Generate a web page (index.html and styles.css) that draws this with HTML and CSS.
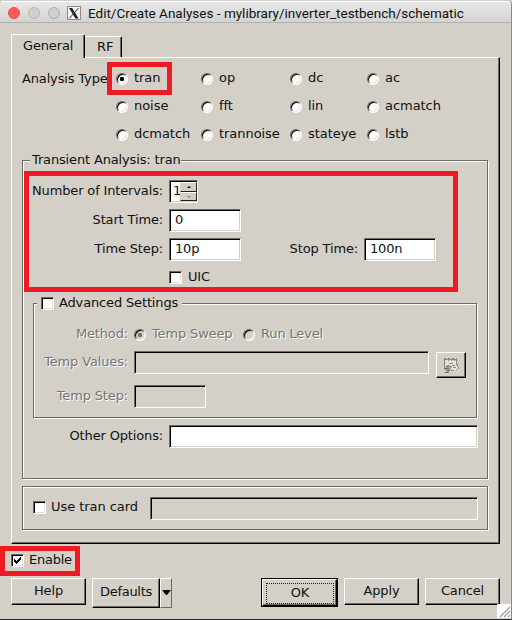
FILE: index.html
```html
<!DOCTYPE html>
<html lang="en">
<head>
<meta charset="utf-8">
<title>Edit/Create Analyses</title>
<link rel="stylesheet" href="styles.css">
</head>
<body>
<div class="window">
  <header class="titlebar">
    <i class="light close"></i><i class="light min"></i><i class="light max"></i>
    <svg class="xlogo" width="14" height="14" viewBox="0 0 14 14"><rect x=".5" y=".5" width="13" height="13" fill="#f4f4f4" stroke="#8b8b8b"/><path d="M2 2h3.2l6.4 10.500H8.400z" fill="#222"/><path d="M11.500 2L2.200 12.500" stroke="#333" stroke-width="1"/></svg>
    <span class="title">Edit/Create Analyses - mylibrary/inverter_testbench/schematic</span>
  </header>
  <nav class="tabs"><div class="tab active">General</div><div class="tab">RF</div></nav>
  <main class="panel">
    <section class="types">
      <span class="types-label">Analysis Type:</span>
      <div class="types-grid">
        <label><i class="radio on"></i>tran</label><label><i class="radio"></i>op</label><label><i class="radio"></i>dc</label><label><i class="radio"></i>ac</label>
        <label><i class="radio"></i>noise</label><label><i class="radio"></i>fft</label><label><i class="radio"></i>lin</label><label><i class="radio"></i>acmatch</label>
        <label><i class="radio"></i>dcmatch</label><label><i class="radio"></i>trannoise</label><label><i class="radio"></i>stateye</label><label><i class="radio"></i>lstb</label>
      </div>
    </section>
    <section class="group transient">
      <div class="legend">Transient Analysis: tran</div>
      <div class="row intervals"><span class="lab">Number of Intervals:</span>
        <div class="field spin"><span>1</span><div class="steps"><i class="step up"></i><i class="step down"></i></div></div></div>
      <div class="row"><span class="lab">Start Time:</span><div class="field short">0</div></div>
      <div class="row"><span class="lab">Time Step:</span><div class="field short">10p</div><span class="lab stop">Stop Time:</span><div class="field short">100n</div></div>
      <div class="row uic"><i class="check"></i><span>UIC</span></div>
      <section class="group advanced">
        <div class="legend"><i class="check"></i><span>Advanced Settings</span></div>
        <div class="arow method"><span class="alab">Method:</span><i class="radio on"></i><span class="sweep">Temp Sweep</span><i class="radio"></i><span class="level">Run Level</span></div>
        <div class="arow values"><span class="alab">Temp Values:</span><div class="field off long"></div>
          <div class="btn edit"><svg width="17" height="17" viewBox="0 0 17 17" shape-rendering="crispEdges"><path d="M1 2h12l2 8-3 3H5l-4-3z" fill="#e5e2db"/><path d="M1 1h2v1h2V1h2v1h2V1h2v1h2V1h1v3h-1V3h-1v1h-1V3H9v1H8V3H6v1H5V3H2v7H1z" fill="#86847f"/><path d="M13 4h1v3h1v3h1v2h-2v1h-3v1H8v-1h5v-1h2v-2h-1V8h-1zM6 6h4v1H6zM9 8h3v1H9zM10 10h3v1h-3z" fill="#8a8882"/><path d="M1 10h3V8h3v1h2v2H8v2H6v2H4v1H1v-1h2v-2H1z" fill="#aaa7a0"/><path d="M3 9h3v1H3zM7 9h1v1H7zM1 11h5v1H1zM4 13h3v1H4zM2 15h4v1H2z" fill="#6e6c68"/></svg></div></div>
        <div class="arow tstep"><span class="alab">Temp Step:</span><div class="field off short"></div></div>
      </section>
      <div class="row other"><span class="lab">Other Options:</span><div class="field wide"></div></div>
    </section>
    <section class="group card"><i class="check"></i><span class="card-label">Use tran card</span><div class="field off card-field"></div></section>
  </main>
  <div class="enable"><i class="check"><svg width="9" height="9" viewBox="0 0 9 9" shape-rendering="crispEdges"><path d="M1 3h1v1h1v1h1V4h1V3h1V2h1V1h1v3H7v1H6v1H5v1H4v1H3V7H2V6H1z"/></svg></i><span>Enable</span></div>
  <footer class="buttons">
    <div class="btn">Help</div>
    <div class="split"><div class="btn defaults">Defaults</div><div class="drop"><i></i></div></div>
    <div class="default-ring"><div class="btn ok"><span>OK</span></div></div>
    <div class="btn">Apply</div>
    <div class="btn">Cancel</div>
  </footer>
  <svg class="grip" width="15" height="15" viewBox="0 0 15 15"><path d="M0 0h15v14H0z" fill="#fff"/><path d="M3 13L13 3M7 13l6-6M11 13l2-2" stroke="#999" stroke-width="1.200"/></svg>
  <div class="mark mark-tran"></div><div class="mark mark-params"></div><div class="mark mark-enable"></div>
</div>
</body>
</html>
```
FILE: styles.css
```css
* { box-sizing: border-box; }
body { margin: 0; background: #d4d0c8; }
.window { position: relative; width: 512px; height: 620px; background: #d4d0c8; border-right: 1px solid #8b8986; border-bottom: 1px solid #2b2a29; border-radius: 5px 5px 0 0; font: 13px/16px "DejaVu Sans", sans-serif; letter-spacing: -.15px; color: #111; overflow: hidden; white-space: nowrap; }
.titlebar { display: flex; align-items: center; height: 23px; padding: 2px 0 0 8px; background: linear-gradient(#fff 0 1px, #e8e8e8 1px, #d3d3d3); border-top: 1px solid #d0d0d0; border-bottom: 1px solid #b1b1b3; }
.light { width: 12px; height: 12px; border-radius: 50%; margin-right: 8px; border: 1px solid #c3b3a1; background: #d2d0ce; }
.light.close { background: #fc5b57; border-color: #e2504c; }
.light.max { border-color: #9db59f; margin-right: 7px; }
.xlogo { margin-right: 7px; }
.title { font: 13.5px/18px Roboto, sans-serif; letter-spacing: 0; color: #111; }

.tabs { display: flex; align-items: flex-end; height: 34px; padding-left: 11px; }
.tab { height: 21px; width: 37px; padding: 2px 0 0 12px; border-top: 1px solid #fff; border-right: 1px solid #000; box-shadow: inset -1px 0 #6b6963; border-radius: 0 2px 0 0; }
.tab.active { position: relative; height: 24px; width: 74px; margin-bottom: -1px; padding: 3px 0 0 11px; border-left: 1px solid #fff; border-radius: 2px 2px 0 0; background: #d4d0c8; }
.panel { width: 489px; height: 487px; margin-left: 11px; border: 1px solid; border-color: #fff #000 #000 #fff; box-shadow: inset -1px -1px #6b6963; padding-left: 10px; }

.types { display: flex; height: 102px; padding-top: 6px; }
.types-label { width: 94px; padding-top: 7px; }
.types-grid { display: grid; grid-template-columns: 85px 89px 77px 90px; grid-template-rows: repeat(3, 28px); }
.types-grid label { display: flex; align-items: center; letter-spacing: -.05px; }
.radio { flex: none; width: 12px; height: 12px; border-radius: 50%; background: #fff; border: 1px solid; border-color: #6b6963 #fff #fff #6b6963; box-shadow: inset 1px 1px #000, inset -1px -1px #e8e5df; margin: 2px 6px 0 0; display: flex; align-items: center; justify-content: center; }
.radio.on::before { content: ""; width: 4px; height: 4px; border-radius: 1px; background: #000; }

.group { border: 1px solid #6b6963; box-shadow: 1px 1px #fff, inset 1px 1px #fff; }
.transient { width: 466px; height: 319px; }
.legend { width: 151px; height: 16px; margin: -9px 0 0 7px; padding-left: 2px; background: #d4d0c8; }
.row { display: flex; align-items: center; height: 23px; margin: 6px 0 0 9px; }
.row.intervals { margin-top: 12px; }
.lab { width: 137px; padding-right: 6px; text-align: right; line-height: 20px; padding-bottom: 1px; }
.lab.stop { width: 123px; }
.field { height: 23px; border: 1px solid; border-color: #6b6963 #fff #fff #6b6963; box-shadow: inset 1px 1px #000, inset -1px -1px #d4d0c8; background: #fff; padding: 2px 0 0 5px; }
.field.off { background: #d4d0c8; }
.short { width: 72px; }
.spin { width: 29px; display: flex; padding: 1px 1px 1px 3px; }
.spin span { width: 7px; padding-top: 1px; }
.steps { position: relative; width: 17px; height: 19px; flex: none; display: grid; grid-template-rows: 10px 9px; }
.step { border: 1px solid; border-color: #fff #222 #222 #d4d0c8; background: #d4d0c8; display: flex; align-items: center; justify-content: center; }
.step::before { content: ""; border: 2px solid transparent; border-top: 0; border-bottom: 2px solid #000; }
.step.down::before { border-bottom: 0; border-top: 2px solid #888; }
.uic { padding-left: 137px; margin-top: 5px; gap: 6px; }
.uic span { padding-bottom: 2px; }
.check { width: 13px; height: 13px; flex: none; background: #fff; border: 1px solid; border-color: #6b6963 #fff #fff #6b6963; box-shadow: inset 1px 1px #000, inset -1px -1px #e4e1da; display: block; }
.check svg { display: block; margin: 1px; }

.advanced { width: 444px; height: 115px; margin: 14px 0 0 10px; }
.advanced .legend { display: flex; gap: 5px; width: 145px; margin-left: 3px; padding-left: 4px; }
.advanced .check { margin-top: 2px; }
.arow { display: flex; align-items: center; }
.alab { width: 100px; padding-right: 6px; text-align: right; }
.alab, .sweep, .level { color: #777570; text-shadow: 1px 1px #fff; }
.method { height: 20px; margin-top: 13px; }
.sweep, .level { padding-bottom: 1px; }
.method .radio { background: #d4d0c8; margin-top: 1px; }
.method .radio.on::before { background: #777570; }
.sweep { width: 91px; }
.values { align-items: flex-start; margin-top: 7px; height: 27px; }
.values .alab, .tstep .alab { padding-top: 3px; }
.long { width: 295px; }
.btn { width: 75px; height: 27px; border: 1px solid; border-color: #fff #000 #000 #fff; box-shadow: inset -1px -1px #6b6963; text-align: center; line-height: 24px; }
.edit { width: 30px; height: 26px; margin: 1px 0 0 7px; padding: 4px 0 0 6px; }
.edit svg { display: block; }
.tstep { margin-top: 7px; align-items: flex-start; }
.other { margin-top: 7px; }
.wide { width: 309px; }
.card { display: flex; width: 466px; height: 44px; margin-top: 7px; padding: 10px 0 0 10px; }
.card .check { margin-top: 4px; }
.card-label { width: 99px; margin-left: 5px; padding-top: 2px; letter-spacing: -.05px; }
.card-field { width: 328px; }

.enable { display: flex; align-items: center; gap: 5px; height: 32px; padding-left: 11px; }
.enable span { letter-spacing: -.25px; }
.enable .check { margin-top: 1px; }
.buttons { display: flex; align-items: flex-start; padding: 2px 0 0 11px; gap: 6px; }
.split { display: flex; width: 80px; margin-right: 83px; }
.defaults { width: 68px; height: 30px; line-height: 26px; letter-spacing: -.3px; }
.drop { width: 12px; height: 30px; border: 1px solid; border-color: #fff #6b6963 #6b6963 #fff; padding: 11px 0 0 1px; }
.drop i { display: block; width: 9px; border: 4px solid transparent; border-top: 5px solid #000; border-bottom: 0; }
.default-ring { width: 77px; height: 29px; background: #000; padding: 1px; }
.ok { height: 27px; padding: 3px 2px 2px 3px; background: #d4d0c8; }
.ok span { display: block; height: 21px; border: 1px dotted #222; line-height: 17px; }
.grip { position: absolute; left: 497px; top: 604px; }

.mark { position: absolute; border: 5px solid #ed1c24; }
.mark-tran { left: 107px; top: 62px; width: 65px; height: 33px; }
.mark-params { left: 24px; top: 171px; width: 434px; height: 121px; }
.mark-enable { left: 0; top: 546px; width: 80px; height: 30px; }
```
